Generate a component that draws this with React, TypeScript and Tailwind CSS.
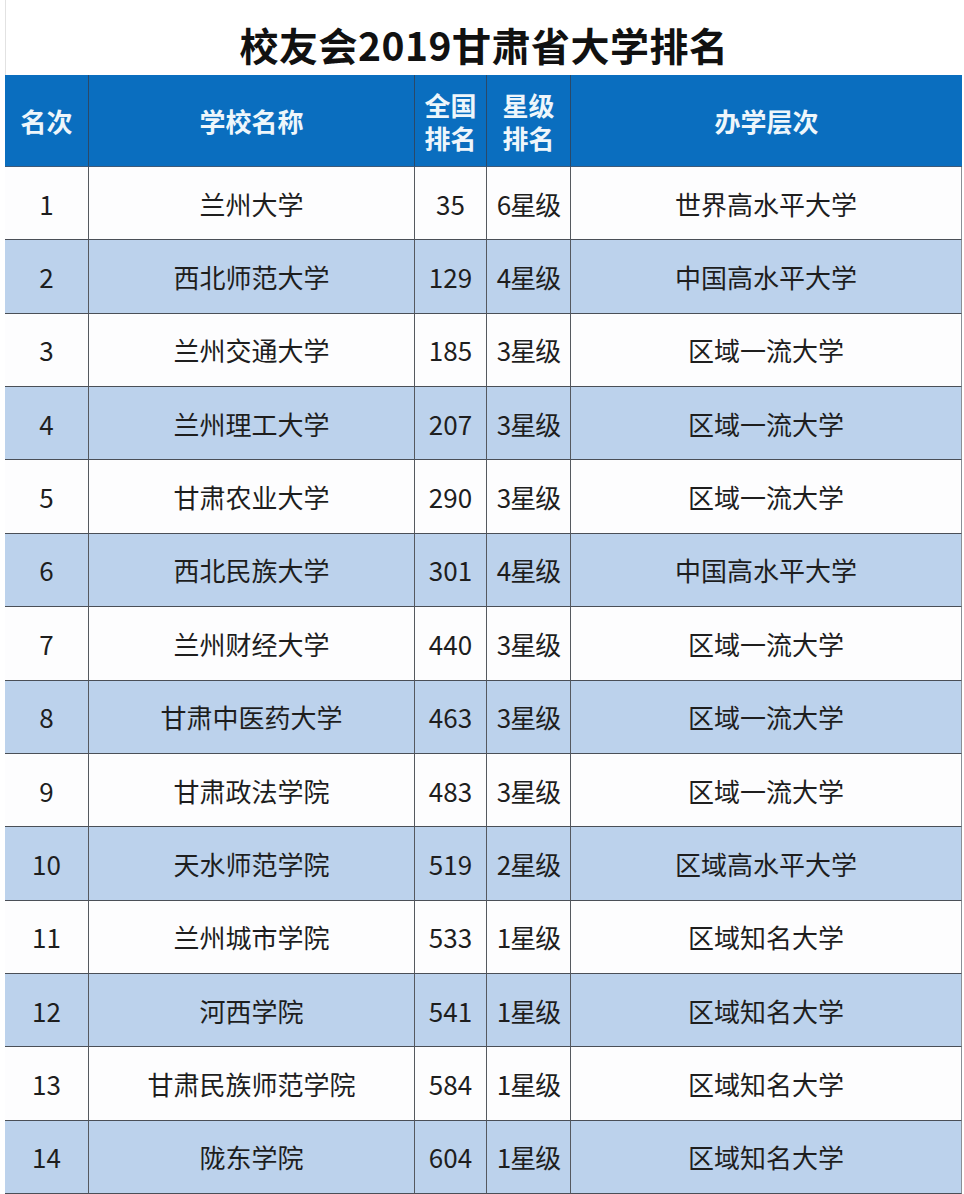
import React from "react";

const rows: [string, string, string, string, string][] = [
  ["1", "兰州大学", "35", "6星级", "世界高水平大学"],
  ["2", "西北师范大学", "129", "4星级", "中国高水平大学"],
  ["3", "兰州交通大学", "185", "3星级", "区域一流大学"],
  ["4", "兰州理工大学", "207", "3星级", "区域一流大学"],
  ["5", "甘肃农业大学", "290", "3星级", "区域一流大学"],
  ["6", "西北民族大学", "301", "4星级", "中国高水平大学"],
  ["7", "兰州财经大学", "440", "3星级", "区域一流大学"],
  ["8", "甘肃中医药大学", "463", "3星级", "区域一流大学"],
  ["9", "甘肃政法学院", "483", "3星级", "区域一流大学"],
  ["10", "天水师范学院", "519", "2星级", "区域高水平大学"],
  ["11", "兰州城市学院", "533", "1星级", "区域知名大学"],
  ["12", "河西学院", "541", "1星级", "区域知名大学"],
  ["13", "甘肃民族师范学院", "584", "1星级", "区域知名大学"],
  ["14", "陇东学院", "604", "1星级", "区域知名大学"],
];

const font = { fontFamily: '"Noto Sans CJK SC", "Noto Sans", sans-serif' };

export default function App() {
  return (
    <div className="w-[964px] h-[1194px] bg-white overflow-hidden" style={font}>
      <div className="h-[75px] ml-[5px] w-[957px] flex items-center justify-center border-l border-[#e2e2e2]">
        <h1 className="text-[39px] font-bold text-[#111] leading-none pt-[14px] tracking-[0.5px]">
          校友会2019甘肃省大学排名
        </h1>
      </div>
      <div className="ml-[5px] w-[957px] grid grid-cols-[84px_326px_72px_84px_391px]">
        {["名次", "学校名称", "全国\n排名", "星级\n排名", "办学层次"].map((h, i) => (
          <div
            key={i}
            className={`h-[92px] bg-[#0a6ebf] text-[#eef6fb] font-bold text-[26px] leading-[33px] flex items-center justify-center text-center whitespace-pre-line border-b border-[#3d5a7a] ${
              i < 4 ? "border-r border-r-[#2a4968]" : ""
            }`}
          >
            {h}
          </div>
        ))}
        {rows.map((r, ri) =>
          r.map((c, ci) => (
            <div
              key={`${ri}-${ci}`}
              className={`h-[73.36px] flex items-center justify-center text-[26px] text-[#1e1e1e] border-b border-[#4a4f57] ${
                ri % 2 === 1 ? "bg-[#bcd2ec]" : "bg-[#fdfdfe]"
              } ${ci < 4 ? "border-r border-r-[#55595f]" : "border-r border-r-[#8a8f96]"} ${
                ci === 3 ? "tracking-[-1px]" : ""
              }`}
            >
              {c}
            </div>
          ))
        )}
      </div>
    </div>
  );
}
